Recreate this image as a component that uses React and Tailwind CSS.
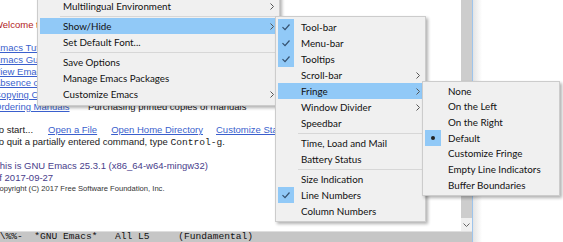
import React from "react";

const menuFont = { fontFamily: 'Lato, "Noto Sans", sans-serif' };
const sansFont = { fontFamily: '"Liberation Sans", Arial, sans-serif' };
const monoFont = { fontFamily: '"Liberation Mono", "Courier New", monospace' };

const Chevron = () => (
  <svg width="4" height="7" viewBox="0 0 4 7" className="mr-[3px] shrink-0">
    <path d="M0.5 0.5 L3.5 3.5 L0.5 6.5" fill="none" stroke="#555" strokeWidth="1" />
  </svg>
);

const Check = () => (
  <svg width="16" height="16" viewBox="0 0 16 16">
    <path d="M4.5 8.2 L7 10.7 L11.5 5.5" fill="none" stroke="#34506e" strokeWidth="1.2" />
  </svg>
);

const Dot = () => <div className="w-[4px] h-[4px] rounded-full bg-[#222]" />;

// one row of a popup menu
const Item = ({ label, arrow, mark, active, tall }) => (
  <div
    className={`flex items-center mx-[2px] ${tall ? "h-[15.7px]" : "h-[16px]"} ${active ? "bg-[#91c9f7]" : ""}`}
  >
    <div
      className={`w-[16px] h-full flex items-center justify-center shrink-0 ${mark ? "bg-[#91c9f7]" : ""}`}
    >
      {mark === "check" && <Check />}
      {mark === "dot" && <Dot />}
    </div>
    <span className="ml-[7px] flex-1 whitespace-nowrap text-[#111]">{label}</span>
    {arrow && <Chevron />}
  </div>
);

const Sep = () => (
  <div className="h-[4px] flex items-center">
    <div className="h-[1px] flex-1 bg-[#d7d7d7] mr-[1px] ml-[22px]" />
  </div>
);

const links = [
  "Emacs Tutorial",
  "Emacs Guided Tour",
  "View Emacs Manual",
  "Absence of Warranty",
  "Copying Conditions",
];

const App = () => {
  return (
    <div className="relative w-[563px] h-[242px] overflow-hidden bg-white text-[9.8px]" style={menuFont}>
      <div className="flex h-full">
        {/* emacs window */}
        <div className="w-[473px] h-full flex flex-col border-r border-[#9dc4ec]">
          <div className="flex flex-1 min-h-0">
            <div className="flex-1 overflow-hidden">
              <div className="ml-[-6px] pt-[19px] text-[9.5px] leading-[11.66px] text-[#1a1a1a]" style={sansFont}>
                <div className="text-[#b22222] whitespace-nowrap">Welcome to GNU Emacs</div>
                <div className="h-[11.66px]" />
                {links.map((l) => (
                  <div key={l} className="whitespace-nowrap">
                    <span className="text-[#3a5fcd] underline">{l}</span>
                  </div>
                ))}
                <div className="flex whitespace-nowrap">
                  <span className="w-[94px] shrink-0">
                    <span className="text-[#3a5fcd] underline">Ordering Manuals</span>
                  </span>
                  <span>Purchasing printed copies of manuals</span>
                </div>
                <div className="h-[11.66px]" />
                <div className="flex whitespace-nowrap">
                  <span className="w-[54px] shrink-0">To start...</span>
                  <span className="text-[#3a5fcd] underline">Open a File</span>
                  <span className="ml-[14px] text-[#3a5fcd] underline">Open Home Directory</span>
                  <span className="ml-[13px] text-[#3a5fcd] underline">Customize Sta</span>
                </div>
                <div className="whitespace-nowrap">
                  To quit a partially entered command, type{" "}
                  <span className="text-[9.6px]" style={monoFont}>Control-g</span>.
                </div>
                <div className="h-[11.66px]" />
                <div className="text-[#483d8b] whitespace-nowrap">This is GNU Emacs 25.3.1 (x86_64-w64-mingw32)</div>
                <div className="text-[#483d8b] whitespace-nowrap">of 2017-09-27</div>
                <div className="text-[7.6px] text-[#333] whitespace-nowrap">
                  Copyright (C) 2017 Free Software Foundation, Inc.
                </div>
              </div>
            </div>
            {/* scroll bar */}
            <div className="w-[11px] flex flex-col">
              <div className="flex-1 bg-[#cdcdcd]" />
              <div className="h-[13px] bg-[#f0f0f0] flex items-center justify-center">
                <svg width="7" height="4" viewBox="0 0 7 4">
                  <path d="M0.5 0.5 L3.5 3.5 L6.5 0.5" fill="none" stroke="#666" strokeWidth="1" />
                </svg>
              </div>
            </div>
          </div>
          {/* mode line */}
          <div
            className="h-[11px] bg-[#c6c6c6] border-t border-[#dedede] text-[9.6px] leading-[10px] whitespace-pre text-[#111] overflow-hidden"
            style={monoFont}
          >
            <div className="ml-[-6px]">{"-\\%%-  *GNU Emacs*   All L5     (Fundamental)"}</div>
          </div>
        </div>
        <div className="w-[9px] h-full bg-gradient-to-r from-[#e4e4e4] to-white" />
        <div className="flex-1" />
      </div>

      {/* Options menu */}
      <div className="absolute left-[37px] top-[-5px] w-[243px] bg-[#f0f0f0] border border-[#cccccc] pt-[2px] pb-[3px] shadow-[2px_2px_3px_rgba(0,0,0,0.3)]">
        <Item label="Multilingual Environment" arrow />
        <Sep />
        <Item label="Show/Hide" arrow active />
        <Item label="Set Default Font..." />
        <Sep />
        <Item label="Save Options" />
        <Item label="Manage Emacs Packages" />
        <Item label="Customize Emacs" arrow />
      </div>

      {/* Show/Hide submenu */}
      <div className="absolute left-[275px] top-[16px] w-[151px] bg-[#f0f0f0] border border-[#cccccc] pt-[2px] pb-[2px] shadow-[2px_2px_3px_rgba(0,0,0,0.3)]">
        <Item label="Tool-bar" mark="check" />
        <Item label="Menu-bar" mark="check" />
        <Item label="Tooltips" mark="check" />
        <Item label="Scroll-bar" arrow />
        <Item label="Fringe" arrow active />
        <Item label="Window Divider" arrow />
        <Item label="Speedbar" />
        <Sep />
        <Item label="Time, Load and Mail" />
        <Item label="Battery Status" />
        <Sep />
        <Item label="Size Indication" />
        <Item label="Line Numbers" mark="check" />
        <Item label="Column Numbers" />
      </div>

      {/* Fringe submenu */}
      <div className="absolute left-[422px] top-[81px] w-[138px] bg-[#f0f0f0] border border-[#cccccc] pt-[1px] pb-[2px] shadow-[2px_2px_3px_rgba(0,0,0,0.3)]">
        <Item tall label="None" />
        <Item tall label="On the Left" />
        <Item tall label="On the Right" />
        <Item tall label="Default" mark="dot" />
        <Item tall label="Customize Fringe" />
        <Item tall label="Empty Line Indicators" />
        <Item tall label="Buffer Boundaries" />
      </div>
    </div>
  );
};

export default App;
